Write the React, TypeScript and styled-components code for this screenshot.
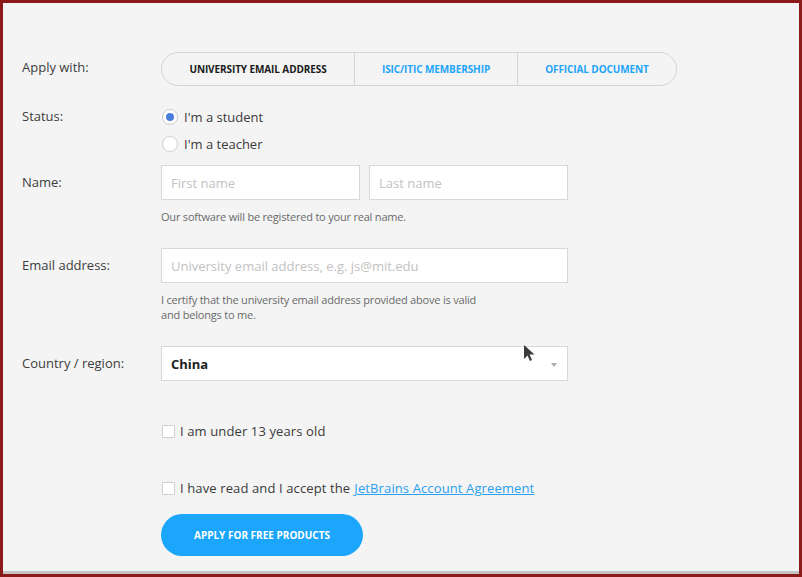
import React from "react";
import styled, { createGlobalStyle } from "styled-components";

const GlobalStyle = createGlobalStyle`
  html, body {
    margin: 0;
    padding: 0;
    background: #8b1a1a;
  }
  body {
    font-family: "Open Sans", "Noto Sans", sans-serif;
    color: #3a3a3a;
  }
  * {
    box-sizing: border-box;
  }
`;

const Frame = styled.div`
  width: 802px;
  height: 577px;
  background: #8b1a1a;
  padding: 3px 3px 3px 3px;
`;

const Panel = styled.div`
  position: relative;
  height: 571px;
  background: #f4f4f4;
  border-bottom: 3px solid #c4c4c4;
  padding: 49px 0 0 19px;
`;

const Row = styled.div<{ $top: number }>`
  display: grid;
  grid-template-columns: 139px 407px;
  align-items: start;
  margin-top: ${(p) => p.$top}px;
`;

const Label = styled.div<{ $lh: number }>`
  font-size: 13px;
  line-height: ${(p) => p.$lh}px;
  color: #3d3d3d;
`;

const Tabs = styled.div`
  display: inline-flex;
  height: 34px;
  border: 1px solid #d4d4d4;
  border-radius: 17px;
  overflow: hidden;
  width: max-content;
`;

const Tab = styled.div<{ $active?: boolean; $w: number }>`
  width: ${(p) => p.$w}px;
  display: flex;
  align-items: center;
  justify-content: center;
  font-size: 10px;
  font-weight: 700;
  letter-spacing: -0.1px;
  text-transform: uppercase;
  color: ${(p) => (p.$active ? "#1a1a1a" : "#1ea4fb")};
  & + & {
    border-left: 1px solid #d4d4d4;
  }
`;

const Options = styled.div`
  display: flex;
  flex-direction: column;
`;

const Option = styled.label`
  display: flex;
  align-items: center;
  height: 27px;
  font-size: 13px;
  color: #3a3a3a;
  padding-left: 1px;
`;

const Radio = styled.span<{ $checked?: boolean }>`
  width: 16px;
  height: 16px;
  border-radius: 50%;
  border: 1px solid #cfcfcf;
  background: #fff;
  margin-right: 6px;
  display: flex;
  align-items: center;
  justify-content: center;
  &::after {
    content: "";
    width: 8px;
    height: 8px;
    border-radius: 50%;
    background: ${(p) => (p.$checked ? "#4a7fdc" : "transparent")};
  }
`;

const Field = styled.div`
  display: flex;
  flex-direction: column;
`;

const Pair = styled.div`
  display: flex;
  gap: 9px;
`;

const Input = styled.input`
  height: 35px;
  width: 100%;
  border: 1px solid #d8d8d8;
  background: #fff;
  padding: 0 9px;
  font-family: inherit;
  font-size: 13px;
  color: #333;
  outline: none;
  &::placeholder {
    color: #c2c2c2;
  }
`;

const Help = styled.div`
  margin-top: 9px;
  font-size: 11px;
  line-height: 15px;
  color: #6a6a6a;
  max-width: 335px;
  letter-spacing: -0.2px;
`;

const Select = styled.div`
  position: relative;
  height: 35px;
  border: 1px solid #d8d8d8;
  background: #fff;
  display: flex;
  align-items: center;
  padding: 0 9px;
  font-size: 13px;
  font-weight: 700;
  color: #222;
`;

const Caret = styled.span`
  position: absolute;
  right: 10px;
  top: 16px;
  width: 0;
  height: 0;
  border-left: 3px solid transparent;
  border-right: 3px solid transparent;
  border-top: 4px solid #aaa;
`;

const Check = styled.label`
  display: flex;
  align-items: center;
  height: 20px;
  font-size: 13px;
  letter-spacing: 0.12px;
  color: #3a3a3a;
  padding-left: 1px;
`;

const Box = styled.span`
  width: 13px;
  height: 13px;
  border: 1px solid #cfcfcf;
  background: #fff;
  border-radius: 1px;
  margin-right: 5px;
`;

const Link = styled.a`
  color: #2a9ff2;
  text-decoration: underline;
  margin-left: 4px;
`;

const Button = styled.button`
  width: 202px;
  height: 42px;
  border: none;
  border-radius: 21px;
  background: #1ba6fb;
  color: #fff;
  font-family: inherit;
  font-size: 10px;
  font-weight: 700;
  text-transform: uppercase;
`;

const Cursor = styled.svg`
  position: absolute;
  left: 520px;
  top: 341px;
`;

export default function App() {
  return (
    <>
      <GlobalStyle />
      <Frame>
        <Panel>
          <Row $top={0}>
            <Label $lh={30}>Apply with:</Label>
            <Tabs>
              <Tab $active $w={192}>University email address</Tab>
              <Tab $w={163}>ISIC/ITIC membership</Tab>
              <Tab $w={159}>Official document</Tab>
            </Tabs>
          </Row>

          <Row $top={17}>
            <Label $lh={27}>Status:</Label>
            <Options>
              <Option>
                <Radio $checked />
                I'm a student
              </Option>
              <Option>
                <Radio />
                I'm a teacher
              </Option>
            </Options>
          </Row>

          <Row $top={8}>
            <Label $lh={35}>Name:</Label>
            <Field>
              <Pair>
                <Input placeholder="First name" />
                <Input placeholder="Last name" />
              </Pair>
              <Help>Our software will be registered to your real name.</Help>
            </Field>
          </Row>

          <Row $top={24}>
            <Label $lh={35}>Email address:</Label>
            <Field>
              <Input placeholder="University email address, e.g. js@mit.edu" />
              <Help>
                I certify that the university email address provided above is valid
                and belongs to me.
              </Help>
            </Field>
          </Row>

          <Row $top={24}>
            <Label $lh={35}>Country / region:</Label>
            <Select>
              China
              <Caret />
            </Select>
          </Row>

          <Row $top={40}>
            <div />
            <Check>
              <Box />
              I am under 13 years old
            </Check>
          </Row>

          <Row $top={37}>
            <div />
            <Check>
              <Box />
              I have read and I accept the
              <Link href="#">JetBrains Account Agreement</Link>
            </Check>
          </Row>

          <Row $top={16}>
            <div />
            <Button>Apply for free products</Button>
          </Row>

          <Cursor width="14" height="20" viewBox="0 0 14 20">
            <path d="M1 1 L1 15 L4.5 11.5 L7 17 L9 16 L6.5 10.5 L11.5 10.5 Z" fill="#3a3a3a" />
          </Cursor>
        </Panel>
      </Frame>
    </>
  );
}
